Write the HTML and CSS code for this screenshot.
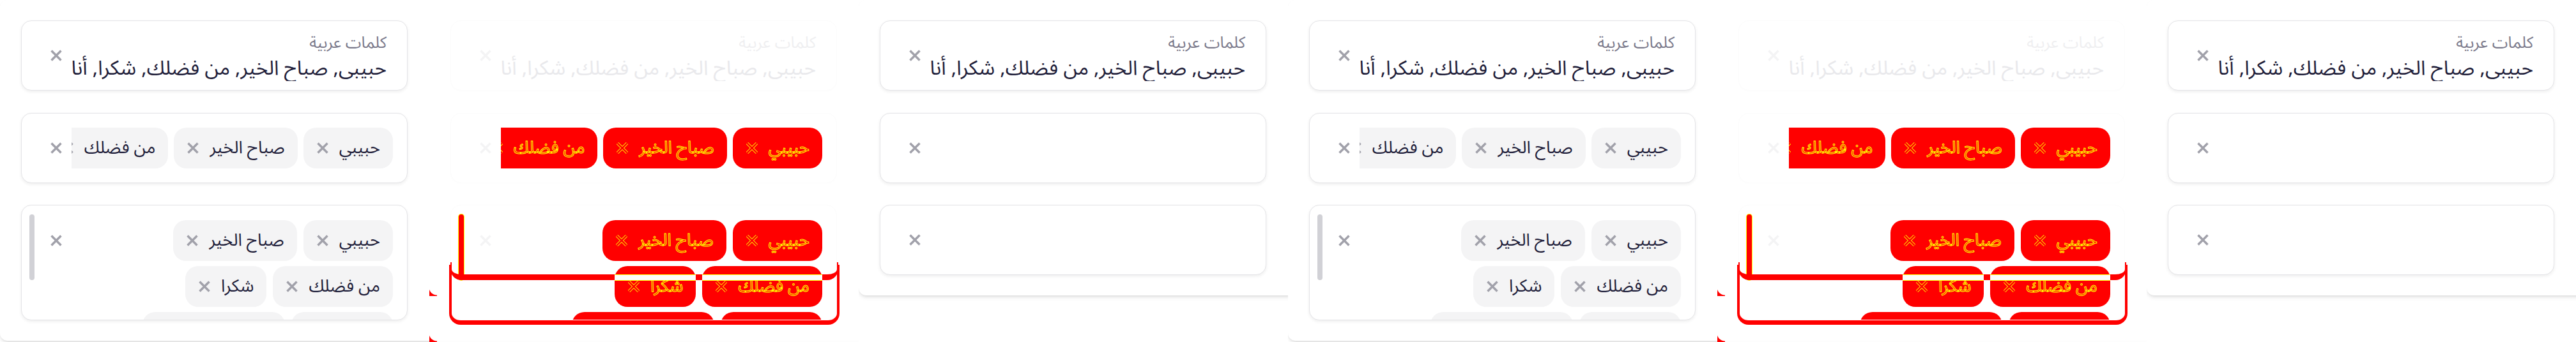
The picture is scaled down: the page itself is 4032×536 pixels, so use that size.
FILE: index.html
```html
<!DOCTYPE html>
<html lang="ar">
<head>
<meta charset="utf-8">
<title>Tags input – visual diff</title>
<link rel="stylesheet" href="styles.css">
</head>
<body>
<main class="page">

  <!-- ===== group 1 ===== -->
  <section class="panel">
    <div class="frame">
      <div class="card card--text">
        <div class="field">
          <div class="label">كلمات عربية</div>
          <div class="value">حبيبي, صباح الخير, من فضلك, شكرا, أنا</div>
        </div>
        <span class="clear"><svg class="x" viewBox="0 0 20 20"><path class="x-back" d="M2.5 2.5L17.5 17.5M17.5 2.5L2.5 17.5"/><path class="x-front" d="M2.5 2.5L17.5 17.5M17.5 2.5L2.5 17.5"/></svg></span>
      </div>
      <div class="card card--tags">
        <div class="tags">
          <span class="chip"><span class="chip-text">حبيبي</span><svg class="x" viewBox="0 0 20 20"><path class="x-back" d="M2.5 2.5L17.5 17.5M17.5 2.5L2.5 17.5"/><path class="x-front" d="M2.5 2.5L17.5 17.5M17.5 2.5L2.5 17.5"/></svg></span>
          <span class="chip"><span class="chip-text">صباح الخير</span><svg class="x" viewBox="0 0 20 20"><path class="x-back" d="M2.5 2.5L17.5 17.5M17.5 2.5L2.5 17.5"/><path class="x-front" d="M2.5 2.5L17.5 17.5M17.5 2.5L2.5 17.5"/></svg></span>
          <span class="chip"><span class="chip-text">من فضلك</span><svg class="x" viewBox="0 0 20 20"><path class="x-back" d="M2.5 2.5L17.5 17.5M17.5 2.5L2.5 17.5"/><path class="x-front" d="M2.5 2.5L17.5 17.5M17.5 2.5L2.5 17.5"/></svg></span>
          <span class="chip"><span class="chip-text">شكرا</span><svg class="x" viewBox="0 0 20 20"><path class="x-back" d="M2.5 2.5L17.5 17.5M17.5 2.5L2.5 17.5"/><path class="x-front" d="M2.5 2.5L17.5 17.5M17.5 2.5L2.5 17.5"/></svg></span>
        </div>
        <span class="clear"><svg class="x" viewBox="0 0 20 20"><path class="x-back" d="M2.5 2.5L17.5 17.5M17.5 2.5L2.5 17.5"/><path class="x-front" d="M2.5 2.5L17.5 17.5M17.5 2.5L2.5 17.5"/></svg></span>
      </div>
      <div class="card card--wrap">
        <div class="rows">
          <div class="row">
            <span class="chip"><span class="chip-text">حبيبي</span><svg class="x" viewBox="0 0 20 20"><path class="x-back" d="M2.5 2.5L17.5 17.5M17.5 2.5L2.5 17.5"/><path class="x-front" d="M2.5 2.5L17.5 17.5M17.5 2.5L2.5 17.5"/></svg></span>
            <span class="chip"><span class="chip-text">صباح الخير</span><svg class="x" viewBox="0 0 20 20"><path class="x-back" d="M2.5 2.5L17.5 17.5M17.5 2.5L2.5 17.5"/><path class="x-front" d="M2.5 2.5L17.5 17.5M17.5 2.5L2.5 17.5"/></svg></span>
          </div>
          <div class="row">
            <span class="chip"><span class="chip-text">من فضلك</span><svg class="x" viewBox="0 0 20 20"><path class="x-back" d="M2.5 2.5L17.5 17.5M17.5 2.5L2.5 17.5"/><path class="x-front" d="M2.5 2.5L17.5 17.5M17.5 2.5L2.5 17.5"/></svg></span>
            <span class="chip"><span class="chip-text">شكرا</span><svg class="x" viewBox="0 0 20 20"><path class="x-back" d="M2.5 2.5L17.5 17.5M17.5 2.5L2.5 17.5"/><path class="x-front" d="M2.5 2.5L17.5 17.5M17.5 2.5L2.5 17.5"/></svg></span>
          </div>
          <div class="row">
            <span class="chip chip--short"><span class="chip-text">أنا</span><svg class="x" viewBox="0 0 20 20"><path class="x-back" d="M2.5 2.5L17.5 17.5M17.5 2.5L2.5 17.5"/><path class="x-front" d="M2.5 2.5L17.5 17.5M17.5 2.5L2.5 17.5"/></svg></span>
            <span class="chip chip--long"><span class="chip-text">مع السلامة</span><svg class="x" viewBox="0 0 20 20"><path class="x-back" d="M2.5 2.5L17.5 17.5M17.5 2.5L2.5 17.5"/><path class="x-front" d="M2.5 2.5L17.5 17.5M17.5 2.5L2.5 17.5"/></svg></span>
          </div>
        </div>
        <span class="clear"><svg class="x" viewBox="0 0 20 20"><path class="x-back" d="M2.5 2.5L17.5 17.5M17.5 2.5L2.5 17.5"/><path class="x-front" d="M2.5 2.5L17.5 17.5M17.5 2.5L2.5 17.5"/></svg></span>
        <span class="scrollbar"></span>
      </div>
    </div>
  </section>

  <section class="panel panel--diff">
    <div class="frame">
      <div class="card card--text">
        <div class="field">
          <div class="label">كلمات عربية</div>
          <div class="value">حبيبي, صباح الخير, من فضلك, شكرا, أنا</div>
        </div>
        <span class="clear"><svg class="x" viewBox="0 0 20 20"><path class="x-back" d="M2.5 2.5L17.5 17.5M17.5 2.5L2.5 17.5"/><path class="x-front" d="M2.5 2.5L17.5 17.5M17.5 2.5L2.5 17.5"/></svg></span>
      </div>
      <div class="card card--tags">
        <div class="tags">
          <span class="chip"><span class="chip-text">حبيبي</span><svg class="x" viewBox="0 0 20 20"><path class="x-back" d="M2.5 2.5L17.5 17.5M17.5 2.5L2.5 17.5"/><path class="x-front" d="M2.5 2.5L17.5 17.5M17.5 2.5L2.5 17.5"/></svg></span>
          <span class="chip"><span class="chip-text">صباح الخير</span><svg class="x" viewBox="0 0 20 20"><path class="x-back" d="M2.5 2.5L17.5 17.5M17.5 2.5L2.5 17.5"/><path class="x-front" d="M2.5 2.5L17.5 17.5M17.5 2.5L2.5 17.5"/></svg></span>
          <span class="chip"><span class="chip-text">من فضلك</span><svg class="x" viewBox="0 0 20 20"><path class="x-back" d="M2.5 2.5L17.5 17.5M17.5 2.5L2.5 17.5"/><path class="x-front" d="M2.5 2.5L17.5 17.5M17.5 2.5L2.5 17.5"/></svg></span>
          <span class="chip"><span class="chip-text">شكرا</span><svg class="x" viewBox="0 0 20 20"><path class="x-back" d="M2.5 2.5L17.5 17.5M17.5 2.5L2.5 17.5"/><path class="x-front" d="M2.5 2.5L17.5 17.5M17.5 2.5L2.5 17.5"/></svg></span>
        </div>
        <span class="clear"><svg class="x" viewBox="0 0 20 20"><path class="x-back" d="M2.5 2.5L17.5 17.5M17.5 2.5L2.5 17.5"/><path class="x-front" d="M2.5 2.5L17.5 17.5M17.5 2.5L2.5 17.5"/></svg></span>
      </div>
      <div class="card card--wrap">
        <div class="rows">
          <div class="row">
            <span class="chip"><span class="chip-text">حبيبي</span><svg class="x" viewBox="0 0 20 20"><path class="x-back" d="M2.5 2.5L17.5 17.5M17.5 2.5L2.5 17.5"/><path class="x-front" d="M2.5 2.5L17.5 17.5M17.5 2.5L2.5 17.5"/></svg></span>
            <span class="chip"><span class="chip-text">صباح الخير</span><svg class="x" viewBox="0 0 20 20"><path class="x-back" d="M2.5 2.5L17.5 17.5M17.5 2.5L2.5 17.5"/><path class="x-front" d="M2.5 2.5L17.5 17.5M17.5 2.5L2.5 17.5"/></svg></span>
          </div>
          <div class="row">
            <span class="chip"><span class="chip-text">من فضلك</span><svg class="x" viewBox="0 0 20 20"><path class="x-back" d="M2.5 2.5L17.5 17.5M17.5 2.5L2.5 17.5"/><path class="x-front" d="M2.5 2.5L17.5 17.5M17.5 2.5L2.5 17.5"/></svg></span>
            <span class="chip"><span class="chip-text">شكرا</span><svg class="x" viewBox="0 0 20 20"><path class="x-back" d="M2.5 2.5L17.5 17.5M17.5 2.5L2.5 17.5"/><path class="x-front" d="M2.5 2.5L17.5 17.5M17.5 2.5L2.5 17.5"/></svg></span>
          </div>
          <div class="row">
            <span class="chip chip--short"><span class="chip-text">أنا</span><svg class="x" viewBox="0 0 20 20"><path class="x-back" d="M2.5 2.5L17.5 17.5M17.5 2.5L2.5 17.5"/><path class="x-front" d="M2.5 2.5L17.5 17.5M17.5 2.5L2.5 17.5"/></svg></span>
            <span class="chip chip--long"><span class="chip-text">مع السلامة</span><svg class="x" viewBox="0 0 20 20"><path class="x-back" d="M2.5 2.5L17.5 17.5M17.5 2.5L2.5 17.5"/><path class="x-front" d="M2.5 2.5L17.5 17.5M17.5 2.5L2.5 17.5"/></svg></span>
          </div>
        </div>
        <span class="clear"><svg class="x" viewBox="0 0 20 20"><path class="x-back" d="M2.5 2.5L17.5 17.5M17.5 2.5L2.5 17.5"/><path class="x-front" d="M2.5 2.5L17.5 17.5M17.5 2.5L2.5 17.5"/></svg></span>
        <span class="scrollbar"></span>
      </div>
    </div>
    <span class="mark mark--expected"></span>
    <span class="mark mark--actual"></span>
    <span class="mark mark--corner mark--corner-a"></span>
    <span class="mark mark--corner mark--corner-e"></span>
  </section>

  <section class="panel">
    <div class="frame">
      <div class="card card--text">
        <div class="field">
          <div class="label">كلمات عربية</div>
          <div class="value">حبيبي, صباح الخير, من فضلك, شكرا, أنا</div>
        </div>
        <span class="clear"><svg class="x" viewBox="0 0 20 20"><path class="x-back" d="M2.5 2.5L17.5 17.5M17.5 2.5L2.5 17.5"/><path class="x-front" d="M2.5 2.5L17.5 17.5M17.5 2.5L2.5 17.5"/></svg></span>
      </div>
      <div class="card card--tags">
        <div class="tags"></div>
        <span class="clear"><svg class="x" viewBox="0 0 20 20"><path class="x-back" d="M2.5 2.5L17.5 17.5M17.5 2.5L2.5 17.5"/><path class="x-front" d="M2.5 2.5L17.5 17.5M17.5 2.5L2.5 17.5"/></svg></span>
      </div>
      <div class="card card--tags">
        <div class="tags"></div>
        <span class="clear"><svg class="x" viewBox="0 0 20 20"><path class="x-back" d="M2.5 2.5L17.5 17.5M17.5 2.5L2.5 17.5"/><path class="x-front" d="M2.5 2.5L17.5 17.5M17.5 2.5L2.5 17.5"/></svg></span>
      </div>
    </div>
  </section>

  <!-- ===== group 2 ===== -->
  <section class="panel">
    <div class="frame">
      <div class="card card--text">
        <div class="field">
          <div class="label">كلمات عربية</div>
          <div class="value">حبيبي, صباح الخير, من فضلك, شكرا, أنا</div>
        </div>
        <span class="clear"><svg class="x" viewBox="0 0 20 20"><path class="x-back" d="M2.5 2.5L17.5 17.5M17.5 2.5L2.5 17.5"/><path class="x-front" d="M2.5 2.5L17.5 17.5M17.5 2.5L2.5 17.5"/></svg></span>
      </div>
      <div class="card card--tags">
        <div class="tags">
          <span class="chip"><span class="chip-text">حبيبي</span><svg class="x" viewBox="0 0 20 20"><path class="x-back" d="M2.5 2.5L17.5 17.5M17.5 2.5L2.5 17.5"/><path class="x-front" d="M2.5 2.5L17.5 17.5M17.5 2.5L2.5 17.5"/></svg></span>
          <span class="chip"><span class="chip-text">صباح الخير</span><svg class="x" viewBox="0 0 20 20"><path class="x-back" d="M2.5 2.5L17.5 17.5M17.5 2.5L2.5 17.5"/><path class="x-front" d="M2.5 2.5L17.5 17.5M17.5 2.5L2.5 17.5"/></svg></span>
          <span class="chip"><span class="chip-text">من فضلك</span><svg class="x" viewBox="0 0 20 20"><path class="x-back" d="M2.5 2.5L17.5 17.5M17.5 2.5L2.5 17.5"/><path class="x-front" d="M2.5 2.5L17.5 17.5M17.5 2.5L2.5 17.5"/></svg></span>
          <span class="chip"><span class="chip-text">شكرا</span><svg class="x" viewBox="0 0 20 20"><path class="x-back" d="M2.5 2.5L17.5 17.5M17.5 2.5L2.5 17.5"/><path class="x-front" d="M2.5 2.5L17.5 17.5M17.5 2.5L2.5 17.5"/></svg></span>
        </div>
        <span class="clear"><svg class="x" viewBox="0 0 20 20"><path class="x-back" d="M2.5 2.5L17.5 17.5M17.5 2.5L2.5 17.5"/><path class="x-front" d="M2.5 2.5L17.5 17.5M17.5 2.5L2.5 17.5"/></svg></span>
      </div>
      <div class="card card--wrap">
        <div class="rows">
          <div class="row">
            <span class="chip"><span class="chip-text">حبيبي</span><svg class="x" viewBox="0 0 20 20"><path class="x-back" d="M2.5 2.5L17.5 17.5M17.5 2.5L2.5 17.5"/><path class="x-front" d="M2.5 2.5L17.5 17.5M17.5 2.5L2.5 17.5"/></svg></span>
            <span class="chip"><span class="chip-text">صباح الخير</span><svg class="x" viewBox="0 0 20 20"><path class="x-back" d="M2.5 2.5L17.5 17.5M17.5 2.5L2.5 17.5"/><path class="x-front" d="M2.5 2.5L17.5 17.5M17.5 2.5L2.5 17.5"/></svg></span>
          </div>
          <div class="row">
            <span class="chip"><span class="chip-text">من فضلك</span><svg class="x" viewBox="0 0 20 20"><path class="x-back" d="M2.5 2.5L17.5 17.5M17.5 2.5L2.5 17.5"/><path class="x-front" d="M2.5 2.5L17.5 17.5M17.5 2.5L2.5 17.5"/></svg></span>
            <span class="chip"><span class="chip-text">شكرا</span><svg class="x" viewBox="0 0 20 20"><path class="x-back" d="M2.5 2.5L17.5 17.5M17.5 2.5L2.5 17.5"/><path class="x-front" d="M2.5 2.5L17.5 17.5M17.5 2.5L2.5 17.5"/></svg></span>
          </div>
          <div class="row">
            <span class="chip chip--short"><span class="chip-text">أنا</span><svg class="x" viewBox="0 0 20 20"><path class="x-back" d="M2.5 2.5L17.5 17.5M17.5 2.5L2.5 17.5"/><path class="x-front" d="M2.5 2.5L17.5 17.5M17.5 2.5L2.5 17.5"/></svg></span>
            <span class="chip chip--long"><span class="chip-text">مع السلامة</span><svg class="x" viewBox="0 0 20 20"><path class="x-back" d="M2.5 2.5L17.5 17.5M17.5 2.5L2.5 17.5"/><path class="x-front" d="M2.5 2.5L17.5 17.5M17.5 2.5L2.5 17.5"/></svg></span>
          </div>
        </div>
        <span class="clear"><svg class="x" viewBox="0 0 20 20"><path class="x-back" d="M2.5 2.5L17.5 17.5M17.5 2.5L2.5 17.5"/><path class="x-front" d="M2.5 2.5L17.5 17.5M17.5 2.5L2.5 17.5"/></svg></span>
        <span class="scrollbar"></span>
      </div>
    </div>
  </section>

  <section class="panel panel--diff">
    <div class="frame">
      <div class="card card--text">
        <div class="field">
          <div class="label">كلمات عربية</div>
          <div class="value">حبيبي, صباح الخير, من فضلك, شكرا, أنا</div>
        </div>
        <span class="clear"><svg class="x" viewBox="0 0 20 20"><path class="x-back" d="M2.5 2.5L17.5 17.5M17.5 2.5L2.5 17.5"/><path class="x-front" d="M2.5 2.5L17.5 17.5M17.5 2.5L2.5 17.5"/></svg></span>
      </div>
      <div class="card card--tags">
        <div class="tags">
          <span class="chip"><span class="chip-text">حبيبي</span><svg class="x" viewBox="0 0 20 20"><path class="x-back" d="M2.5 2.5L17.5 17.5M17.5 2.5L2.5 17.5"/><path class="x-front" d="M2.5 2.5L17.5 17.5M17.5 2.5L2.5 17.5"/></svg></span>
          <span class="chip"><span class="chip-text">صباح الخير</span><svg class="x" viewBox="0 0 20 20"><path class="x-back" d="M2.5 2.5L17.5 17.5M17.5 2.5L2.5 17.5"/><path class="x-front" d="M2.5 2.5L17.5 17.5M17.5 2.5L2.5 17.5"/></svg></span>
          <span class="chip"><span class="chip-text">من فضلك</span><svg class="x" viewBox="0 0 20 20"><path class="x-back" d="M2.5 2.5L17.5 17.5M17.5 2.5L2.5 17.5"/><path class="x-front" d="M2.5 2.5L17.5 17.5M17.5 2.5L2.5 17.5"/></svg></span>
          <span class="chip"><span class="chip-text">شكرا</span><svg class="x" viewBox="0 0 20 20"><path class="x-back" d="M2.5 2.5L17.5 17.5M17.5 2.5L2.5 17.5"/><path class="x-front" d="M2.5 2.5L17.5 17.5M17.5 2.5L2.5 17.5"/></svg></span>
        </div>
        <span class="clear"><svg class="x" viewBox="0 0 20 20"><path class="x-back" d="M2.5 2.5L17.5 17.5M17.5 2.5L2.5 17.5"/><path class="x-front" d="M2.5 2.5L17.5 17.5M17.5 2.5L2.5 17.5"/></svg></span>
      </div>
      <div class="card card--wrap">
        <div class="rows">
          <div class="row">
            <span class="chip"><span class="chip-text">حبيبي</span><svg class="x" viewBox="0 0 20 20"><path class="x-back" d="M2.5 2.5L17.5 17.5M17.5 2.5L2.5 17.5"/><path class="x-front" d="M2.5 2.5L17.5 17.5M17.5 2.5L2.5 17.5"/></svg></span>
            <span class="chip"><span class="chip-text">صباح الخير</span><svg class="x" viewBox="0 0 20 20"><path class="x-back" d="M2.5 2.5L17.5 17.5M17.5 2.5L2.5 17.5"/><path class="x-front" d="M2.5 2.5L17.5 17.5M17.5 2.5L2.5 17.5"/></svg></span>
          </div>
          <div class="row">
            <span class="chip"><span class="chip-text">من فضلك</span><svg class="x" viewBox="0 0 20 20"><path class="x-back" d="M2.5 2.5L17.5 17.5M17.5 2.5L2.5 17.5"/><path class="x-front" d="M2.5 2.5L17.5 17.5M17.5 2.5L2.5 17.5"/></svg></span>
            <span class="chip"><span class="chip-text">شكرا</span><svg class="x" viewBox="0 0 20 20"><path class="x-back" d="M2.5 2.5L17.5 17.5M17.5 2.5L2.5 17.5"/><path class="x-front" d="M2.5 2.5L17.5 17.5M17.5 2.5L2.5 17.5"/></svg></span>
          </div>
          <div class="row">
            <span class="chip chip--short"><span class="chip-text">أنا</span><svg class="x" viewBox="0 0 20 20"><path class="x-back" d="M2.5 2.5L17.5 17.5M17.5 2.5L2.5 17.5"/><path class="x-front" d="M2.5 2.5L17.5 17.5M17.5 2.5L2.5 17.5"/></svg></span>
            <span class="chip chip--long"><span class="chip-text">مع السلامة</span><svg class="x" viewBox="0 0 20 20"><path class="x-back" d="M2.5 2.5L17.5 17.5M17.5 2.5L2.5 17.5"/><path class="x-front" d="M2.5 2.5L17.5 17.5M17.5 2.5L2.5 17.5"/></svg></span>
          </div>
        </div>
        <span class="clear"><svg class="x" viewBox="0 0 20 20"><path class="x-back" d="M2.5 2.5L17.5 17.5M17.5 2.5L2.5 17.5"/><path class="x-front" d="M2.5 2.5L17.5 17.5M17.5 2.5L2.5 17.5"/></svg></span>
        <span class="scrollbar"></span>
      </div>
    </div>
    <span class="mark mark--expected"></span>
    <span class="mark mark--actual"></span>
    <span class="mark mark--corner mark--corner-a"></span>
    <span class="mark mark--corner mark--corner-e"></span>
  </section>

  <section class="panel">
    <div class="frame">
      <div class="card card--text">
        <div class="field">
          <div class="label">كلمات عربية</div>
          <div class="value">حبيبي, صباح الخير, من فضلك, شكرا, أنا</div>
        </div>
        <span class="clear"><svg class="x" viewBox="0 0 20 20"><path class="x-back" d="M2.5 2.5L17.5 17.5M17.5 2.5L2.5 17.5"/><path class="x-front" d="M2.5 2.5L17.5 17.5M17.5 2.5L2.5 17.5"/></svg></span>
      </div>
      <div class="card card--tags">
        <div class="tags"></div>
        <span class="clear"><svg class="x" viewBox="0 0 20 20"><path class="x-back" d="M2.5 2.5L17.5 17.5M17.5 2.5L2.5 17.5"/><path class="x-front" d="M2.5 2.5L17.5 17.5M17.5 2.5L2.5 17.5"/></svg></span>
      </div>
      <div class="card card--tags">
        <div class="tags"></div>
        <span class="clear"><svg class="x" viewBox="0 0 20 20"><path class="x-back" d="M2.5 2.5L17.5 17.5M17.5 2.5L2.5 17.5"/><path class="x-front" d="M2.5 2.5L17.5 17.5M17.5 2.5L2.5 17.5"/></svg></span>
      </div>
    </div>
  </section>

</main>
</body>
</html>
```

FILE: styles.css
```css
* { box-sizing: border-box; }

html, body {
  margin: 0;
  padding: 0;
  background: #ffffff;
}

body {
  width: 4032px;
  height: 536px;
  overflow: hidden;
  font-family: "Noto Sans Arabic", "Noto Sans", "DejaVu Sans", sans-serif;
  color: #1f1e3a;
}

.page {
  display: flex;
  width: 4032px;
  height: 536px;
}

.panel {
  position: relative;
  flex: 0 0 672px;
  width: 672px;
  height: 536px;
  overflow: hidden;
}

.frame {
  width: 700px;
  padding: 32px 0 32px 33px;
  background: #ffffff;
  border-radius: 12px;
  box-shadow: 0 4px 6px -1px rgba(0, 0, 0, 0.10), 0 2px 4px -2px rgba(0, 0, 0, 0.10);
  display: flex;
  flex-direction: column;
  gap: 34.5px;
}

/* ---------- card ---------- */
.card {
  direction: rtl;
  width: 605px;
  height: 110px;
  border: 1px solid #e4e4e7;
  border-radius: 16px;
  background: #ffffff;
  box-shadow: 0 2px 5px rgba(0, 0, 0, 0.07);
  display: flex;
  align-items: center;
  gap: 14px;
  padding: 0 22px 0 44px;
}

.card--wrap {
  position: relative;
  height: 181px;
  align-items: flex-start;
  padding-top: 23px;
  overflow: hidden;
}

.card--wrap .clear {
  margin-top: 22px;
}

.field {
  flex: 1;
  min-width: 0;
  overflow: hidden;
  padding-right: 10px;
  padding-top: 5px;
}

.label {
  font-size: 25px;
  line-height: 30px;
  color: #7b7a8b;
  white-space: nowrap;
}

.value {
  margin-top: 5px;
  font-size: 31.5px;
  line-height: 40px;
  color: #1f1e3a;
  white-space: nowrap;
}

.clear {
  flex: 0 0 20px;
  width: 20px;
  height: 20px;
  display: block;
}

.x {
  display: block;
  width: 20px;
  height: 20px;
  flex-shrink: 0;
}

.x path {
  fill: none;
  stroke: #a1a1aa;
  stroke-width: 3.5;
}

.x .x-front { display: none; }

/* ---------- chips ---------- */
.tags {
  flex: 1;
  min-width: 0;
  display: flex;
  gap: 9px;
  overflow: hidden;
  align-self: stretch;
  align-items: center;
}

.rows {
  flex: 1;
  min-width: 0;
  display: flex;
  flex-direction: column;
  gap: 8px;
}

.row {
  display: flex;
  gap: 10px;
}

.chip {
  position: relative;
  flex: 0 0 auto;
  height: 64px;
  border-radius: 20px;
  background: #f4f4f5;
  display: flex;
  align-items: center;
  gap: 16px;
  padding: 0 20px;
  white-space: nowrap;
}

.chip-text {
  font-size: 27px;
  line-height: 34px;
  color: #1f1e3a;
}

.chip--short { width: 159px; }
.chip--long { width: 223px; }

.scrollbar {
  position: absolute;
  left: 12px;
  top: 14px;
  width: 8px;
  height: 103px;
  border-radius: 4px;
  background: #d1d1d6;
}

/* ---------- diff panel ---------- */
.panel--diff .frame {
  box-shadow: 0 4px 6px -1px rgba(0, 0, 0, 0.01);
}

.panel--diff .card {
  border-color: #fcfcfc;
  box-shadow: 0 2px 5px rgba(0, 0, 0, 0.008);
}

.panel--diff .label { color: #efeff1; }
.panel--diff .value { color: #e9e9ec; }
.panel--diff .clear .x path { stroke: #f4f4f5; }

.panel--diff .chip {
  z-index: 2;
  background: #ff0000;
}

.panel--diff .chip-text {
  color: #ff0000;
  -webkit-text-stroke: 1px #ffff00;
}

.panel--diff .chip .x .x-back {
  stroke: #ffff00;
  stroke-width: 4.5;
}

.panel--diff .chip .x .x-front {
  display: inline;
  stroke: #ff0000;
  stroke-width: 2.5;
}

.panel--diff .row:nth-child(2) .chip::after {
  content: "";
  position: absolute;
  left: 0;
  right: 0;
  top: 13px;
  height: 8px;
  background: #fdfdfd;
  border-top: 1px solid #ffff00;
  border-bottom: 1px solid #ffff00;
}

.panel--diff .scrollbar {
  background: #ff0000;
  box-shadow: 0 0 0 1px #ffff00;
}

.mark {
  position: absolute;
  z-index: 1;
  display: block;
}

.mark--expected {
  left: 31px;
  top: 415px;
  width: 611px;
  height: 94px;
  border-style: solid;
  border-color: #ff0000;
  border-width: 0 4px 7px 4px;
  border-radius: 0 0 18px 18px;
}

.mark--actual {
  left: 33px;
  top: 411px;
  width: 607px;
  height: 28px;
  border-style: solid;
  border-color: #ff0000;
  border-width: 0 2px 9px 2px;
  border-radius: 0 0 17px 17px;
}

.mark--corner {
  left: 0;
  width: 12px;
  height: 14px;
  background: radial-gradient(circle at 100% 0, transparent 12px, #ff0000 13px);
}

.mark--corner-a { top: 450px; }
.mark--corner-e { top: 522px; }
```
